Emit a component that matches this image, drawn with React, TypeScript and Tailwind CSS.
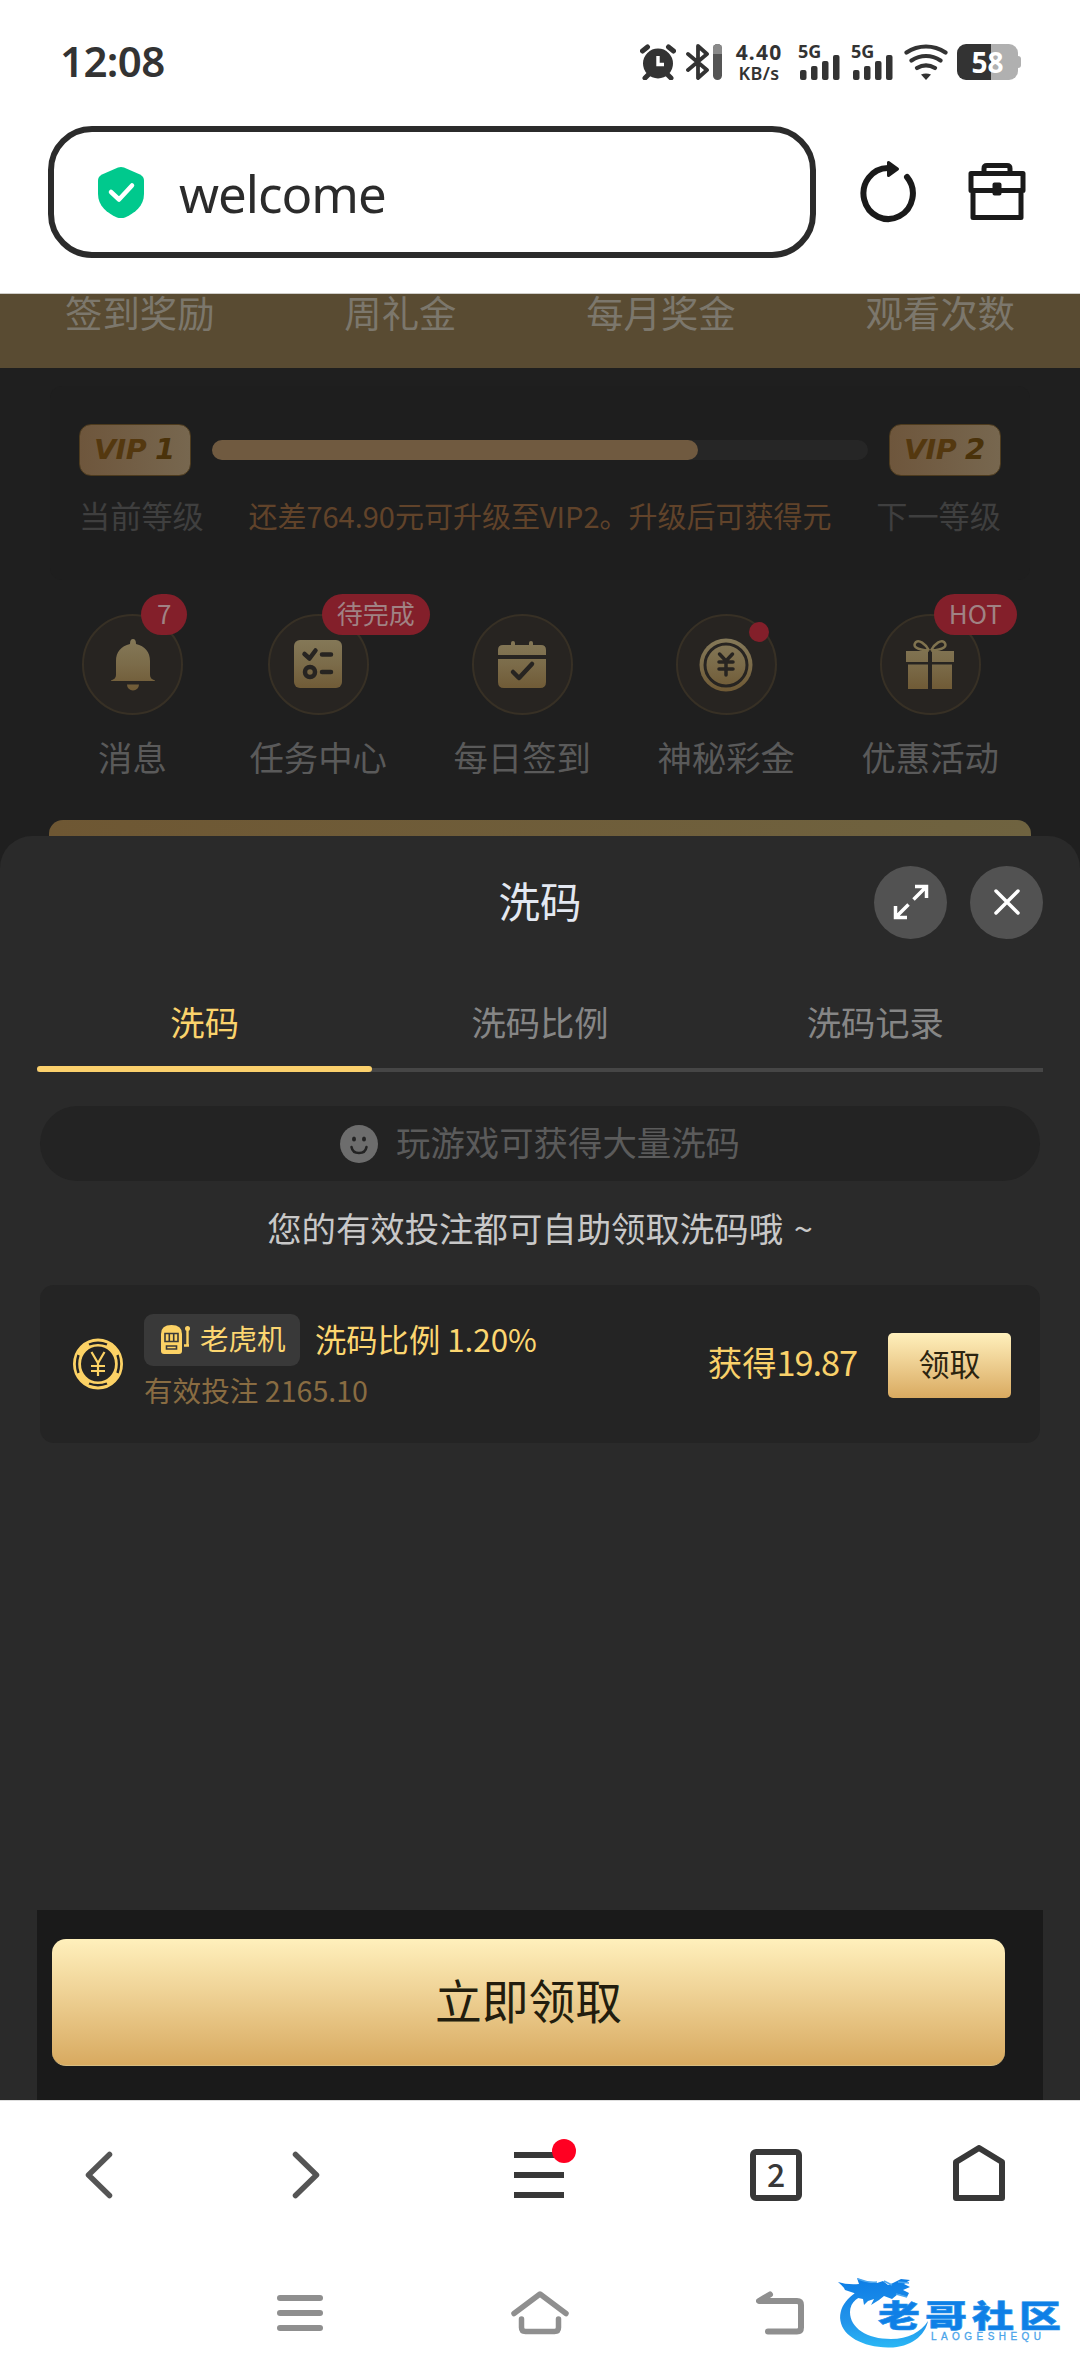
import React from "react";

const ink = "#2b2b2b";

/* ---------- Barra de status ---------- */

function SignalBars() {
  return (
    <div className="relative h-9 w-[43px]">
      <span className="absolute -left-[2px] top-0 font-['Noto_Sans'] text-[18px] leading-[14px] font-bold text-[#333]">5G</span>
      <svg className="absolute bottom-0 left-0" width="40" height="26" viewBox="0 0 40 26" fill="#333">
        <rect x="0" y="16" width="6.5" height="10" rx="2" />
        <rect x="11" y="12" width="6.5" height="14" rx="2" />
        <rect x="22" y="7" width="6.5" height="19" rx="2" />
        <rect x="33" y="1" width="6.5" height="25" rx="2" />
      </svg>
    </div>
  );
}

function StatusBar() {
  return (
    <div className="flex h-[126px] items-start justify-between pt-11 pr-[59px] pl-[60px] text-[#333]">
      <span className="mt-[-1px] font-['Noto_Sans'] text-[42px] leading-9 font-semibold tracking-[-0.6px]">12:08</span>
      <div className="flex h-9">
        <svg width="36" height="36" viewBox="0 0 36 36">
          <g stroke="#333" strokeWidth="5" strokeLinecap="round">
            <path d="M2.5 7 7.500 3M33.500 7 28.500 3M5 34l5-5M31 34l-5-5" />
          </g>
          <circle cx="18" cy="19.500" r="15" fill="#333" />
          <path d="M18 12v8.500h6" fill="none" stroke="#fff" strokeWidth="3.400" />
        </svg>
        <svg className="ml-[10px]" width="24" height="36" viewBox="0 0 24 36" fill="none" stroke="#333" strokeWidth="3.800" strokeLinejoin="round" strokeLinecap="round">
          <path d="M2 10 21 26 12 34V2l9 8L2 26" />
        </svg>
        <div className="ml-[3px] h-9 w-[9px] overflow-hidden rounded-full bg-[#555]">
          <div className="h-[10px] bg-[#8a8a8a]" />
        </div>
        <div className="ml-[12px] flex w-[50px] flex-col items-center font-['Noto_Sans'] font-bold">
          <span className="text-[21px] leading-[16px] tracking-[1.2px]">4.40</span>
          <span className="mt-[5px] text-[18px] leading-4 font-semibold tracking-[0.3px]">KB/s</span>
        </div>
        <div className="ml-[16px]"><SignalBars /></div>
        <div className="ml-[10px]"><SignalBars /></div>
        <svg className="ml-[8px]" width="44" height="36" viewBox="0 0 44 36" fill="none" stroke="#333" strokeWidth="4.200" strokeLinecap="round">
          <path d="M2.500 8.500c12-8 27-8 39 0M7.500 16.500c9-6 20-6 29 0M13 24c6-3.600 12-3.600 18 0" />
          <path d="M17 30.500q5-2 10 0L22 36z" fill="#333" stroke="none" />
        </svg>
        <div className="ml-[9px] flex items-center">
          <div className="flex h-9 w-[61px] items-center justify-center rounded-[9px] bg-linear-to-r from-[#333] from-56% to-[#b0b0b0] to-56% font-['Noto_Sans'] text-[28px] leading-none font-bold text-white">
            58
          </div>
          <div className="h-3 w-[3px] rounded-r-sm bg-[#b0b0b0]" />
        </div>
      </div>
    </div>
  );
}

/* ---------- Barra de endereço ---------- */

function AddressBar() {
  return (
    <div className="flex h-[132px] items-center pl-12">
      <div className="flex h-[132px] w-[768px] items-center rounded-[44px] border-[6px] border-[#2b2b2b] pl-[44px]">
        <svg width="46" height="52" viewBox="0 0 46 52">
          <path d="M20 1.600q3-1.200 6 0L42 8.500q4 2 4 6V28c0 12-9 19-19 23.500q-4 1.500-8 0C9 47 0 40 0 28V14.500q0-4 4-6z" fill="#00c98d" />
          <path d="m13 26 8 7.500L34 19.500" fill="none" stroke="#fff" strokeWidth="4.500" strokeLinecap="round" strokeLinejoin="round" />
        </svg>
        <span className="ml-[35px] pt-[3px] font-['Noto_Sans'] text-[51px] leading-none tracking-[-1px] text-[#2b2b2b]">welcome</span>
      </div>
      <svg className="mt-[-3px] ml-[44px]" width="58" height="64" viewBox="0 0 58 64" fill="none" stroke="#1a1a1a" strokeWidth="6" strokeLinecap="round">
        <path d="M28 9A24.700 25.500 0 1 0 47 18" />
        <path d="M28.500 3.500v13L37.500 10z" fill="#1a1a1a" strokeWidth="3" strokeLinejoin="round" />
      </svg>
      <svg className="mt-[-2px] ml-[50px]" width="58" height="58" viewBox="0 0 58 58" fill="none" stroke="#1a1a1a" strokeWidth="5" strokeLinejoin="round">
        <path d="M16 11V6.500q0-3 3-3h20q3 0 3 3V11M3 11.500h52v17H3zM5 28.500v27h48v-27" />
        <rect x="26.500" y="22.500" width="5" height="9" fill="#1a1a1a" strokeWidth="4" />
      </svg>
    </div>
  );
}

/* ---------- Página escurecida ao fundo ---------- */

const rewards = ["签到奖励", "周礼金", "每月奖金", "观看次数"];

function VipBadge({ level }: { level: number }) {
  return (
    <div className="flex h-[52px] w-[112px] items-center rounded-xl border border-[#4d3b1e] bg-linear-to-r from-[#6e563c] to-[#77674f] pl-[14px] font-['DejaVu_Sans'] leading-none font-bold text-[#54380f] italic">
      <span className="w-[61px] origin-left scale-x-110 text-[26px] tracking-[-0.5px]">VIP</span>
      <span className="-mt-[2px] text-[29px] text-[#4a320a]">{level}</span>
    </div>
  );
}

function VipCard() {
  return (
    <section className="mx-[50px] mt-[18px] h-[194px] rounded-xl bg-[#1e1e1e] px-[29px] pt-[38px]">
      <div className="flex items-center justify-between">
        <VipBadge level={1} />
        <div className="h-5 w-[656px] rounded-full bg-[#262626]">
          <div className="h-5 w-[486px] rounded-full bg-[#705a40]" />
        </div>
        <VipBadge level={2} />
      </div>
      <div className="mt-[22px] flex items-center justify-between text-[31.200px] leading-[34px] text-[#3f3f3f]">
        <span>当前等级</span>
        <span className="text-[29px] text-[#61432a]">还差764.90元可升级至VIP2。升级后可获得元</span>
        <span>下一等级</span>
      </div>
    </section>
  );
}

function GoldDefs({ id }: { id: string }) {
  return (
    <defs>
      <linearGradient id={id} x1="0" y1="0" x2="0" y2="56" gradientUnits="userSpaceOnUse">
        <stop offset="0" stopColor="#857959" />
        <stop offset="0.500" stopColor="#7b6b49" />
        <stop offset="1" stopColor="#6e5833" />
      </linearGradient>
    </defs>
  );
}

function BellIcon() {
  return (
    <svg width="56" height="56" viewBox="0 0 56 56" fill="url(#gBell)">
      <GoldDefs id="gBell" />
      <path d="M28 2q3 0 3 5c9 2 14 8 14 17v14q0 4 5 5.500V44H6v-.5q5-1.500 5-5.500V24C11 15 16 9 25 7q0-5 3-5zM22 47.500h12a6 6 0 0 1-12 0z" />
    </svg>
  );
}

function TaskIcon() {
  return (
    <svg width="56" height="56" viewBox="0 0 56 56">
      <GoldDefs id="gTask" />
      <rect x="4" y="3" width="48" height="48" rx="6" fill="url(#gTask)" />
      <g fill="none" stroke="#272421" strokeWidth="4.500" strokeLinecap="round" strokeLinejoin="round">
        <path d="m14.500 17 5 4.500 6-8M32 17.500h9M32 35h9" />
        <circle cx="20" cy="35" r="5" />
      </g>
    </svg>
  );
}

function CalendarIcon() {
  return (
    <svg width="56" height="56" viewBox="0 0 56 56" fill="url(#gCal)">
      <GoldDefs id="gCal" />
      <path d="M4 18v-5q0-5 5-5h8V6a2 2 0 0 1 4 0v2h14V6a2 2 0 0 1 4 0v2h8q5 0 5 5v5zM4 22h48v23q0 6-6 6H10q-6 0-6-6z" />
      <path d="m19 35 6 6 13-14" fill="none" stroke="#272421" strokeWidth="4.500" strokeLinecap="round" strokeLinejoin="round" />
    </svg>
  );
}

function CoinIcon() {
  return (
    <svg width="56" height="56" viewBox="0 0 56 56">
      <GoldDefs id="gCoin" />
      <circle cx="28" cy="28" r="26.500" fill="url(#gCoin)" />
      <circle cx="28" cy="28" r="21" fill="none" stroke="#272421" strokeWidth="3" />
      <path d="m21.500 17 6.500 7 6.500-7M21 25h14M21 32h14M28 24v14" fill="none" stroke="#272421" strokeWidth="3.500" strokeLinecap="round" />
    </svg>
  );
}

function GiftIcon() {
  return (
    <svg width="56" height="56" viewBox="0 0 56 56" fill="url(#gGift)">
      <GoldDefs id="gGift" />
      <path d="M4 14h22v11H4zM30 14h22v11H30zM6 27.500h20V52H6zM30 27.500h20V52H30z" />
      <path d="M27 13.500C23 6 17 3 14 5c-4 4 0 8 13 8.500M29 13.500C33 6 39 3 42 5c4 4 0 8-13 8.500" fill="none" stroke="#80734f" strokeWidth="2.500" />
    </svg>
  );
}

const shortcuts = [
  { label: "消息", icon: <BellIcon />, badge: "7" },
  { label: "任务中心", icon: <TaskIcon />, badge: "待完成" },
  { label: "每日签到", icon: <CalendarIcon /> },
  { label: "神秘彩金", icon: <CoinIcon />, dot: true },
  { label: "优惠活动", icon: <GiftIcon />, badge: "HOT" },
];

function Shortcuts() {
  return (
    <nav className="mt-[34px] flex justify-between pr-[81px] pl-[82px]">
      {shortcuts.map((s) => (
        <div key={s.label} className="flex flex-col items-center">
          <div className="relative flex h-[101px] w-[101px] items-center justify-center rounded-full border-2 border-[#373025] bg-[#272421]">
            {s.icon}
            {s.badge && (
              <span
                className={`absolute -top-[22px] flex h-[41px] items-center rounded-full bg-[#831f2a] pb-[3px] text-[26px] leading-none whitespace-nowrap text-[#a08284] ${
                  s.badge === "7" ? "left-[57px] px-4" : "left-[52px] px-[15px]"
                }`}
              >
                {s.badge}
              </span>
            )}
            {s.dot && <span className="absolute top-[6px] left-[71px] h-5 w-5 rounded-full bg-[#831f2a]" />}
          </div>
          <span className="mt-[22px] text-[34.400px] leading-[38px] text-[#5a5a5a]">{s.label}</span>
        </div>
      ))}
    </nav>
  );
}

/* ---------- Painel 洗码 ---------- */

const tabs = ["洗码", "洗码比例", "洗码记录"];

function SheetHeader() {
  return (
    <div className="flex h-[132px] items-center pr-[37px] pl-[206px]">
      <h2 className="flex-1 pb-[3px] text-center text-[41.500px] leading-none text-[#e3e8f1]">洗码</h2>
      <button className="flex h-[73px] w-[73px] items-center justify-center rounded-full bg-[#525252]">
        <svg width="36" height="36" viewBox="0 0 36 36" fill="none" stroke="#fff" strokeWidth="3.500">
          <path d="M22 2.500h11.500V14M33 3 20.500 15.500M2.500 22v11.500H14M3 33l12.500-12.500" />
        </svg>
      </button>
      <button className="ml-[23px] flex h-[73px] w-[73px] items-center justify-center rounded-full bg-[#525252]">
        <svg width="28" height="28" viewBox="0 0 28 28" fill="none" stroke="#fff" strokeWidth="3.500" strokeLinecap="round">
          <path d="m3 3 22 22M25 3 3 25" />
        </svg>
      </button>
    </div>
  );
}

function Tabs() {
  return (
    <div className="mx-[37px] flex h-[104px]">
      {tabs.map((t, i) => (
        <div
          key={t}
          className={`relative flex flex-1 justify-center border-b-4 border-[#464646] pt-[34px] text-[34.300px] leading-[38px] ${
            i === 0 ? "text-[#fad36c]" : "text-[#868686]"
          }`}
        >
          {t}
          {i === 0 && <span className="absolute -bottom-1 left-0 h-[6px] w-full rounded-sm bg-[#fbd06c]" />}
        </div>
      ))}
    </div>
  );
}

function ChipIcon() {
  return (
    <svg width="50" height="52" viewBox="0 0 50 52" fill="none" stroke="#fcd265">
      <ellipse cx="25" cy="26" rx="21" ry="21.500" strokeWidth="8" />
      <g stroke="#242424" strokeWidth="2.400">
        <path d="M16 6.500Q25 3 34 6.500M16 45.500Q25 49 34 45.500M5.500 17Q2.500 26 5.500 35M44.500 17Q47.500 26 44.500 35" />
      </g>
      <path d="m18.500 14 6.500 11 6.500-11M18 28h14M18 33h14M25 25v13" strokeWidth="2.200" />
    </svg>
  );
}

function SlotIcon() {
  return (
    <svg width="29" height="30" viewBox="0 0 29 30">
      <path d="M0 9Q0 0 10.500 0T21 9v17q0 3-3 3H3q-3 0-3-3z" fill="#fcd265" />
      <path d="M4 8.500h13v8H4zM8.300 8.500v8M12.700 8.500v8M5.500 21h10v3h-10z" fill="none" stroke="#393939" strokeWidth="1.600" />
      <path d="M26.500 4v17M23 20.500h5" stroke="#fcd265" strokeWidth="2.400" />
      <circle cx="26.500" cy="3.500" r="2.500" fill="#fcd265" />
    </svg>
  );
}

function RebateRow() {
  return (
    <div className="mx-10 mt-[32px] flex h-[158px] items-center rounded-[14px] bg-[#242424] pr-[29px] pl-[33px]">
      <ChipIcon />
      <div className="ml-[21px] flex-1 self-start pt-[29px]">
        <div className="flex items-center text-[#fcd670]">
          <div className="flex h-[52px] w-[156px] items-center rounded-[9px] bg-[#393939] pl-[17px] text-[28.500px] leading-none">
            <SlotIcon />
            <span className="ml-[10px] pb-[3px] whitespace-nowrap">老虎机</span>
          </div>
          <span className="ml-[15px] pb-[3px] text-[31.300px] leading-none whitespace-nowrap">洗码比例 1.20%</span>
        </div>
        <p className="mt-[8px] text-[28.600px] leading-[32px] text-[#896c42]">有效投注 2165.10</p>
      </div>
      <span className="pb-[5px] text-[34.400px] leading-none text-[#f9d16a]">
        获得<span className="tracking-[-1.1px]">19.87</span>
      </span>
      <button className="mt-[2px] ml-[31px] flex h-[65px] w-[123px] items-center justify-center rounded-[5px] bg-linear-to-b from-[#fff0bc] to-[#d9aa60] pb-[5px] text-[31px] leading-none text-[#2b2410]">
        领取
      </button>
    </div>
  );
}

function Sheet() {
  return (
    <section className="flex h-[1264px] flex-col rounded-t-[32px] bg-[#2a2a2a]">
      <SheetHeader />
      <Tabs />
      <div className="mx-10 mt-[34px] flex h-[75px] items-center justify-center rounded-full bg-[#232323] text-[34.400px] leading-none text-[#5b5b5b]">
        <svg width="38" height="38" viewBox="0 0 38 38" fill="#6d6d6d">
          <circle cx="19" cy="19" r="19" />
          <g fill="#232323">
            <ellipse cx="14" cy="14" rx="2" ry="2.500" />
            <ellipse cx="24" cy="14" rx="2" ry="2.500" />
          </g>
          <path d="M11.500 22q1 6 7.500 6t7.500-6" fill="none" stroke="#232323" strokeWidth="2.500" strokeLinecap="round" />
        </svg>
        <span className="ml-[18px] pb-[4px]">玩游戏可获得大量洗码</span>
      </div>
      <p className="mt-[20px] text-center text-[34.400px] leading-[52px] text-[#c8c8c8]">
        您的有效投注都可自助领取洗码哦<span className="ml-[3px]"> ~</span>
      </p>
      <RebateRow />
      <div className="mx-[37px] mt-auto h-[190px] bg-[#1a1a1a] pt-[29px] pl-[15px]">
        <button className="flex h-[127px] w-[953px] items-center justify-center rounded-[14px] border-b border-[#d8bd80] bg-linear-to-b from-[#fff0bc] to-[#d8aa60] pb-[6px] text-[46.800px] leading-none text-[#221d0e]">
          立即领取
        </button>
      </div>
    </section>
  );
}

/* ---------- Navegação inferior ---------- */

function BrowserNav() {
  return (
    <div className="flex h-[150px] items-center border-t border-[#dedede] bg-white pb-[2px] pl-[85px]">
      <svg width="28" height="50" viewBox="0 0 28 50" fill="none" stroke="#555" strokeWidth="5.500" strokeLinecap="round" strokeLinejoin="round">
        <path d="M24.500 4.500 3.500 25l21 20.500" />
      </svg>
      <svg className="ml-[179px]" width="28" height="50" viewBox="0 0 28 50" fill="none" stroke="#555" strokeWidth="5.500" strokeLinecap="round" strokeLinejoin="round">
        <path d="m3.500 4.500 21 20.500-21 20.500" />
      </svg>
      <div className="relative ml-[194px] flex h-[46px] w-[50px] flex-col justify-between">
        <span className="h-[6px] bg-[#383838]" />
        <span className="h-[6px] bg-[#383838]" />
        <span className="h-[6px] bg-[#383838]" />
        <span className="absolute -top-[13px] left-[38px] h-6 w-6 rounded-full bg-[#ff0022]" />
      </div>
      <div className="ml-[186px] flex h-[52px] w-[52px] items-center justify-center rounded-[6px] border-[6px] border-[#383838] text-[32px] leading-none font-medium text-[#383838]">
        <span className="-mt-[3px]">2</span>
      </div>
      <svg className="mb-1 ml-[151px]" width="52" height="56" viewBox="0 0 52 56" fill="none" stroke="#383838" strokeWidth="6" strokeLinejoin="round">
        <path d="M26 3 3 17v36h46V17z" />
      </svg>
    </div>
  );
}

function SystemNav() {
  return (
    <div className="flex h-[126px] items-center bg-white pl-[277px]">
      <div className="flex h-9 w-[46px] flex-col justify-between">
        <span className="h-[6px] rounded-full bg-[#8f8f8f]" />
        <span className="h-[6px] rounded-full bg-[#8f8f8f]" />
        <span className="h-[6px] rounded-full bg-[#8f8f8f]" />
      </div>
      <svg className="ml-[188px]" width="58" height="44" viewBox="0 0 58 44" fill="none" stroke="#8f8f8f" strokeWidth="5.500" strokeLinecap="round" strokeLinejoin="round">
        <path d="M3 22.500 29 3l26 19.500M10.500 28v8.500q0 4 4 4h29q4 0 4-4V28" />
      </svg>
      <svg className="ml-[187px]" width="48" height="44" viewBox="0 0 48 44" fill="none" stroke="#8f8f8f" strokeWidth="6" strokeLinecap="round" strokeLinejoin="round">
        <path d="M14 3.500 3 10h38q4 0 4 4v22.500q0 4-4 4H12" />
      </svg>
    </div>
  );
}

function Watermark() {
  return (
    <svg className="absolute right-[2px] bottom-[22px]" width="240" height="80" viewBox="0 0 240 80">
      <defs>
        <linearGradient id="wm" x1="0" y1="0" x2="0" y2="80" gradientUnits="userSpaceOnUse">
          <stop offset="0.100" stopColor="#0f7fe6" />
          <stop offset="0.600" stopColor="#2294ea" />
          <stop offset="1" stopColor="#2cc0f8" />
        </linearGradient>
      </defs>
      {/* corpo do dragão */}
      <path d="M36 12C14 16 0 31 2.500 47 5 62 24 73 50 73.500 72 74 87 62 90 47 83 58 70 65 53 65 29 65 12 54 12 38 12 27 22 20 34 21z" fill="url(#wm)" />
      {/* cabeça */}
      <path d="M0 8q9 3 21 2l-2-6 10 4 10 1 6-2 5 4 5-2 8-4 9 1-6 4 6 3-7 3 6 3-2 4-9-3-6 5-8-3-5 4-8 5 3-6-6 2-4 4-1-6-5-1-4-5-9-3Q7 14 0 8z" fill="url(#wm)" />
      <path d="M20 5q10 4 19 3M46 7l8 4M60 8l11 1M58 20l11 3" fill="none" stroke="#4aa6f0" strokeWidth="1.500" />
      <text transform="translate(40 53) scale(1 0.720)" className="font-['Noto_Sans_CJK_SC'] text-[42px] font-black" letterSpacing="5" fill="url(#wm)" stroke="#2294ea" strokeWidth="0.800">
        老哥社区
      </text>
      <text x="93" y="66" className="font-['Liberation_Sans'] text-[10px]" textLength="110" fill="#4aa4ea" stroke="#4aa4ea" strokeWidth="0.300">
        LAOGESHEQU
      </text>
    </svg>
  );
}

export default function App() {
  return (
    <div className="relative h-[2376px] w-[1080px] overflow-hidden bg-[#1f1f1f] font-['Noto_Sans_CJK_SC',sans-serif]" style={{ color: ink }}>
      <header className="h-[294px] border-b border-[#cfcdc9] bg-white">
        <StatusBar />
        <AddressBar />
      </header>

      <div className="h-[542px]">
        <div className="flex h-[74px] justify-between bg-[#594b32] px-[65px] text-[37.400px] leading-[37px] text-[#7c776c]">
          {rewards.map((r) => (
            <span key={r}>{r}</span>
          ))}
        </div>
        <VipCard />
        <Shortcuts />
        <div className="mx-[49px] mt-[45px] h-4 rounded-t-[14px] bg-linear-to-r from-[#6e5733] to-[#6f6340]" />
      </div>

      <Sheet />
      <BrowserNav />
      <SystemNav />
      <Watermark />
    </div>
  );
}
